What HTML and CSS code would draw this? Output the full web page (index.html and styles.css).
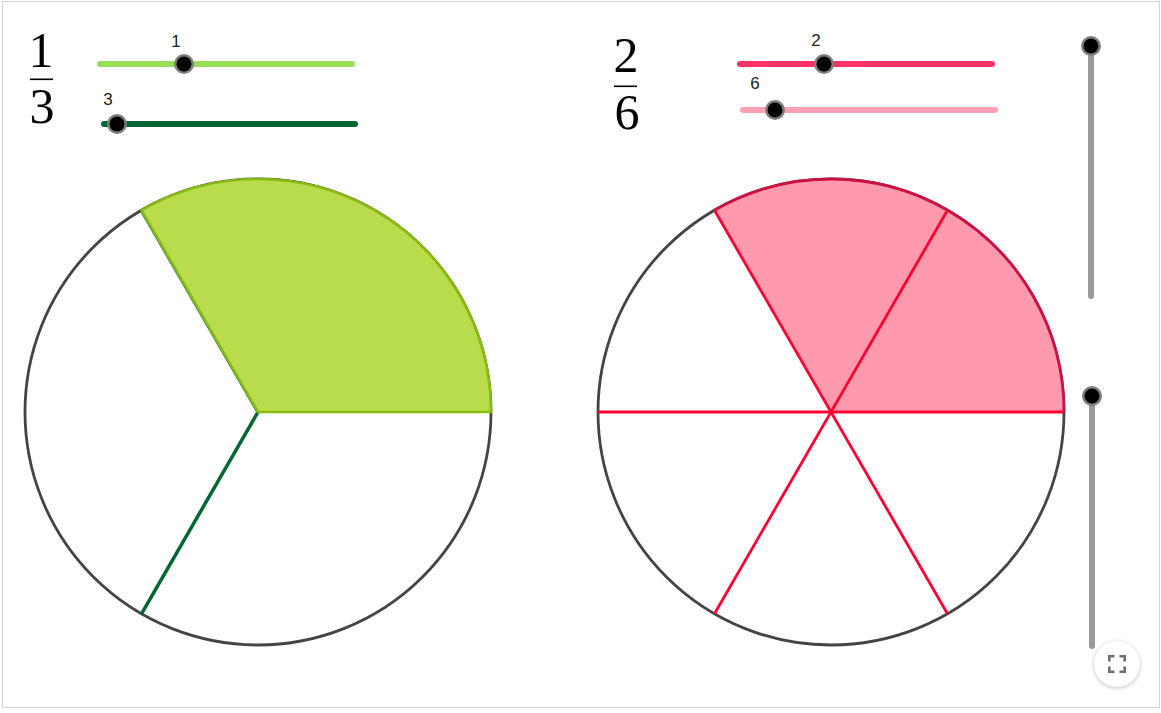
FILE: index.html
```html
<!DOCTYPE html>
<html>
<head>
<meta charset="utf-8">
<link rel="stylesheet" href="styles.css">
</head>
<body>
<div class="applet">
  <svg class="canvas" viewBox="3 2 1156 705" width="1156" height="705" xmlns="http://www.w3.org/2000/svg">
    <!-- fractions -->
    <g class="frac">
      <text x="41" y="67" text-anchor="middle">1</text>
      <rect x="30" y="78.5" width="23" height="1.6" fill="#000"/>
      <text x="42" y="123" text-anchor="middle">3</text>
      <text x="626" y="72" text-anchor="middle">2</text>
      <rect x="614" y="85.5" width="23" height="1.6" fill="#000"/>
      <text x="627" y="129" text-anchor="middle">6</text>
    </g>

    <!-- left circle -->
    <circle cx="258" cy="412" r="233" fill="#fff" stroke="#444" stroke-width="2.8"/>
    <line x1="258" y1="412" x2="141.5" y2="613.8" stroke="#006633" stroke-width="3.5"/>
    <line x1="258" y1="412" x2="141.5" y2="210.2" stroke="#006633" stroke-width="3.5"/>
    <path d="M258,412 L491,412 A233,233 0 0 0 141.5,210.2 Z" fill="#b9dc4d" stroke="#88bb11" stroke-width="2.6" stroke-linejoin="round"/>

    <!-- right circle -->
    <circle cx="831" cy="412" r="233" fill="#fff" stroke="#444" stroke-width="2.8"/>
    <path d="M831,412 L1064,412 A233,233 0 0 0 714.5,210.2 Z" fill="#ff99ad"/>
    <path d="M1064,412 A233,233 0 0 0 714.5,210.2" fill="none" stroke="#cc1144" stroke-width="2.8"/>
    <g stroke="#ff0033" stroke-width="2.8">
      <line x1="598" y1="412" x2="1064" y2="412"/>
      <line x1="714.5" y1="210.2" x2="947.5" y2="613.8"/>
      <line x1="947.5" y1="210.2" x2="714.5" y2="613.8"/>
    </g>

    <!-- sliders -->
    <g stroke-linecap="round" stroke-width="6">
      <line x1="100" y1="64" x2="352" y2="64" stroke="#99dd55"/>
      <line x1="104" y1="124" x2="355" y2="124" stroke="#006633"/>
      <line x1="740" y1="64" x2="992" y2="64" stroke="#ff3366"/>
      <line x1="743" y1="110" x2="995" y2="110" stroke="#ffa0b4"/>
      <line x1="1091" y1="46" x2="1091" y2="296" stroke="#999"/>
      <line x1="1092" y1="396" x2="1092" y2="646" stroke="#999"/>
    </g>
    <g class="knob">
      <circle cx="184" cy="64" r="10" fill="#7f7f7f"/><circle cx="184" cy="64" r="7.5" fill="#000"/>
      <circle cx="117" cy="124" r="10" fill="#7f7f7f"/><circle cx="117" cy="124" r="7.5" fill="#000"/>
      <circle cx="824" cy="64" r="10" fill="#7f7f7f"/><circle cx="824" cy="64" r="7.5" fill="#000"/>
      <circle cx="775" cy="110" r="10" fill="#7f7f7f"/><circle cx="775" cy="110" r="7.5" fill="#000"/>
      <circle cx="1091" cy="46" r="10" fill="#7f7f7f"/><circle cx="1091" cy="46" r="7.5" fill="#000"/>
      <circle cx="1092" cy="396" r="10" fill="#7f7f7f"/><circle cx="1092" cy="396" r="7.5" fill="#000"/>
    </g>
    <g class="lbl">
      <text x="176" y="47" text-anchor="middle">1</text>
      <text x="108" y="105" text-anchor="middle">3</text>
      <text x="816" y="46" text-anchor="middle">2</text>
      <text x="755" y="89" text-anchor="middle">6</text>
    </g>
  </svg>
  <button class="fullscreen" aria-label="Fullscreen">
    <svg viewBox="0 0 18 18" width="18" height="18">
      <path d="M1.3 6.5V1.3h5.2M11.5 1.3h5.2v5.2M16.7 11.5v5.2h-5.2M6.5 16.7H1.3v-5.2" fill="none" stroke="#6e6e6e" stroke-width="2.6"/>
    </svg>
  </button>
</div>
</body>
</html>
```

FILE: styles.css
```css
html, body {
  margin: 0;
  padding: 0;
  background: #fff;
}
body {
  padding: 1px 0 0 2px;
}
.applet {
  position: relative;
  width: 1156px;
  height: 705px;
  border: 1px solid #d3d3d3;
  overflow: hidden;
  background: #fff;
}
.canvas {
  display: block;
}
.frac text {
  font-family: "Liberation Serif", "DejaVu Serif", serif;
  font-size: 50px;
  fill: #000;
}
.lbl text {
  font-family: "Liberation Sans", Arial, sans-serif;
  font-size: 17px;
  fill: #222;
}
.fullscreen {
  position: absolute;
  left: 1091px;
  top: 639px;
  width: 46px;
  height: 46px;
  border-radius: 50%;
  border: none;
  background: #fff;
  box-shadow: 0 1px 4px rgba(0,0,0,0.25);
  padding: 0;
  display: flex;
  align-items: center;
  justify-content: center;
}
.fullscreen svg {
  display: block;
}
```
